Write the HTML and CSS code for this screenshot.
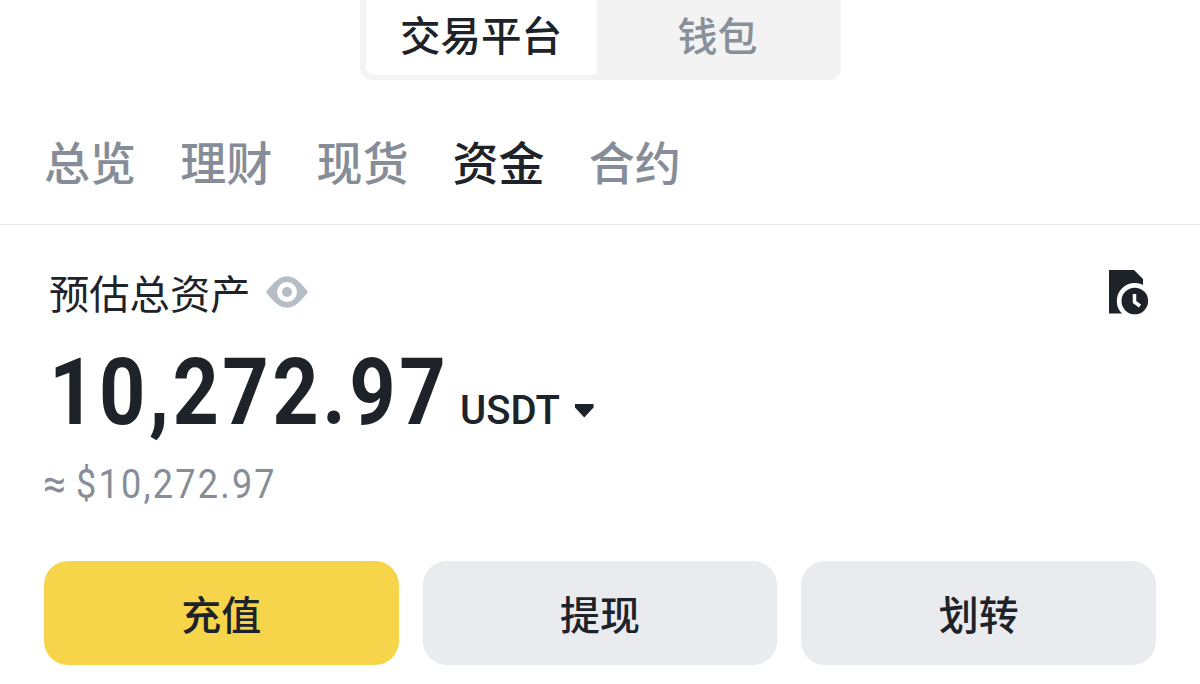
FILE: index.html
```html
<!DOCTYPE html>
<html lang="zh-CN">
<head>
    <meta charset="UTF-8">
    <title>资金</title>
    <link rel="stylesheet" href="styles.css">
</head>
<body>

    <div class="switch">
        <div class="switch-item active">交易平台</div>
        <div class="switch-item">钱包</div>
    </div>

    <div class="tabs">
        <a class="tab">总览</a>
        <a class="tab">理财</a>
        <a class="tab">现货</a>
        <a class="tab active">资金</a>
        <a class="tab">合约</a>
    </div>

    <div class="title-row">
        <span class="title">预估总资产</span>
        <svg class="eye" width="42" height="32" viewBox="0 0 42 32">
            <path fill="#b7bdc4" fill-rule="evenodd" d="M0 16Q8 5.500 14 2Q21-1.500 28 2Q34 5.500 42 16Q34 26.500 28 30Q21 33.500 14 30Q8 26.500 0 16ZM21 6a10 10 0 1 0 0 20 10 10 0 0 0 0-20Z"/>
            <circle cx="21" cy="16" r="5" fill="#b7bdc4"/>
        </svg>
        <svg class="history" width="41" height="46" viewBox="0 0 41 46">
            <path fill="#1e2329" d="M1 1H26L35 10V44.500H1Z"/>
            <circle cx="26.800" cy="32" r="18" fill="#fff"/>
            <circle cx="26.800" cy="32" r="13.300" fill="#1e2329"/>
            <path d="M26.500 25V33L32 37" fill="none" stroke="#fff" stroke-width="3.500"/>
        </svg>
    </div>

    <div class="balance">
        <span class="amount">10,272.97</span>
        <span class="unit">USDT</span>
        <svg class="arrow" width="19" height="14" viewBox="0 0 19 14">
            <path fill="#1e2329" d="M0 0H18.500V3.500L9.250 13.500 0 3.500Z"/>
        </svg>
    </div>
    <div class="approx"><span class="sign">≈</span><span class="fiat">$10,272.97</span></div>

    <div class="buttons">
        <button class="btn primary">充值</button>
        <button class="btn">提现</button>
        <button class="btn">划转</button>
    </div>

</body>
</html>
```

FILE: styles.css
```css
* { box-sizing: border-box; }
body { margin: 0; height: 684px; overflow: hidden; background: #fff; color: #1e2329; font-family: "Noto Sans CJK SC", sans-serif; }

.switch { display: flex; width: 481px; height: 80px; margin: 0 auto; padding: 0 2px 5px 6px; background: #f3f3f3; border-radius: 0 0 12px 12px; }
.switch-item { flex: 1; line-height: 68px; text-align: center; font-size: 40px; font-weight: 500; color: #8a909a; }
.switch-item.active { flex: 0 0 231px; background: #fff; color: #1e2329; font-size: 40.500px; border-radius: 0 0 2px 8px; }

.tabs { display: flex; gap: 44.200px; height: 145px; padding: 45px 44px 0; border-bottom: 1px solid #e8e9eb; }
.tab { font-size: 46px; line-height: 70px; font-weight: 500; color: #868d99; }
.tab.active { color: #1e2329; }

.title-row { display: flex; align-items: center; height: 60px; margin-top: 37px; padding: 0 51px 0 49px; }
.title { font-size: 40.300px; line-height: 60px; }
.eye { margin-left: 16px; }
.history { margin-left: auto; }

.balance { display: flex; align-items: baseline; height: 130px; padding: 6px 0 0 49px; }
/* narrow digits */
.amount { width: 396px; font-family: Roboto, sans-serif; font-size: 92px; font-weight: 700; line-height: 130px; letter-spacing: 4px; white-space: nowrap; transform: scaleX(.88); transform-origin: left; }
.unit { margin-left: 15px; font-family: Roboto, sans-serif; font-size: 40px; font-weight: 500; }
.arrow { margin-left: 15px; transform: translateY(-6px); }
.approx { display: flex; height: 60px; padding: 2px 0 0 43px; font-family: Roboto, sans-serif; font-size: 41px; line-height: 60px; color: #868d96; }
.fiat { margin-left: 10px; letter-spacing: 2.500px; transform: scaleX(.88); transform-origin: left; }

.buttons { display: flex; gap: 24px; padding: 49px 44px 0; }
.btn { flex: 1; height: 104px; border: 0; border-radius: 24px; background: #e9ebef; color: #1e2329; font-family: "Noto Sans CJK SC", sans-serif; font-size: 40px; font-weight: 500; }
.btn.primary { background: #f7d54b; }
```
